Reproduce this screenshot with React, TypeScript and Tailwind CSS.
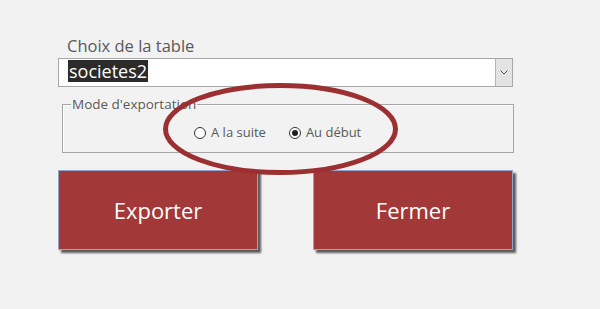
import React from "react";

function Radio({ checked }: { checked?: boolean }) {
    return (
        <span className="w-[12px] h-[12px] rounded-full border border-[#333333] bg-white flex items-center justify-center">
            {checked && <span className="w-[6px] h-[6px] rounded-full bg-[#1f1f1f]" />}
        </span>
    );
}

export default function App() {
    return (
        <div className="relative w-[600px] h-[309px] overflow-hidden bg-[#f2f2f2] font-['Open_Sans',sans-serif]">
            <div className="pt-[35px] pl-[58px] w-[514px]">
                {/* combo */}
                <div className="pl-[9px] text-[16.5px] leading-[22px] text-[#595959]">Choix de la table</div>
                <div className="mt-[1px] h-[29px] w-[455px] border border-[#a8a8a8] bg-white flex">
                    <div className="flex-1 pl-[9px] pt-[1px]">
                        <span className="inline-block bg-[#2d2b29] text-white text-[18px] leading-[22px] px-[1px]">societes2</span>
                    </div>
                    <div className="w-[17px] border-l border-[#b5b5b5] bg-[#e3e3e3] flex items-center justify-center">
                        <svg width="8" height="5" viewBox="0 0 8 5">
                            <path d="M0.5 0.5 L4 4 L7.5 0.5" stroke="#555" strokeWidth="1" fill="none" />
                        </svg>
                    </div>
                </div>

                {/* options group */}
                <fieldset className="ml-[4px] mt-[9px] w-[452px] h-[57px] border border-[#a6a6a6] shadow-[inset_1px_1px_0_#ffffff] px-0">
                    <legend className="ml-[8px] px-[1px] text-[13.5px] leading-[16px] text-[#595959]">Mode d'exportation</legend>
                    <div className="flex items-center pl-[131px] pt-[11px] text-[13px] text-[#595959]">
                        <label className="flex items-center gap-[5px]">
                            <Radio />
                            <span>A la suite</span>
                        </label>
                        <label className="flex items-center gap-[5px] ml-[23px]">
                            <Radio checked />
                            <span>Au début</span>
                        </label>
                    </div>
                </fieldset>

                {/* buttons */}
                <div className="mt-[17px] flex gap-[55px]">
                    <button className="w-[200px] h-[80px] bg-[#a23837] border border-[#8fa6cc] shadow-[3px_3px_2px_rgba(40,40,40,0.75)] text-white text-[22px]">
                        Exporter
                    </button>
                    <button className="w-[200px] h-[80px] bg-[#a23837] border border-[#8fa6cc] shadow-[3px_3px_2px_rgba(40,40,40,0.75)] text-white text-[22px]">
                        Fermer
                    </button>
                </div>
            </div>

            {/* ellipse highlight drawn over the form */}
            <svg className="absolute left-0 top-0 pointer-events-none" width="600" height="309" viewBox="0 0 600 309">
                <ellipse cx="280.5" cy="129" rx="115" ry="43.5" fill="none" stroke="#9c2f31" strokeWidth="5" />
            </svg>
        </div>
    );
}
